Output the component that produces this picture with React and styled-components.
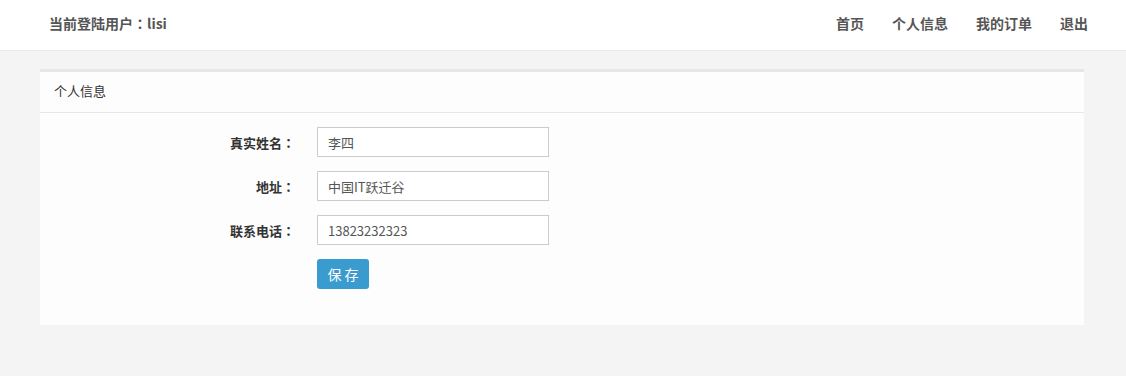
import styled, { createGlobalStyle } from "styled-components"

const GlobalStyle = createGlobalStyle`
  * { box-sizing: border-box; }
  body {
    margin: 0;
    background: #f4f4f4;
    font-family: "Noto Sans CJK SC", "Open Sans", sans-serif;
    color: #333;
  }
`

const Header = styled.header`
  height: 51px;
  background: #fff;
  border-bottom: 1px solid #ebebeb;
  display: flex;
  align-items: center;
  justify-content: space-between;
  padding: 0 38px 0 49px;
`

const UserText = styled.div`
  font-size: 14px;
  font-weight: bold;
  color: #555;
  margin-top: -4px;
`

// full-width colon drawn centred in its box, as in the original font
const Colon = styled.span`
  font-family: "Noto Sans CJK TC", sans-serif;
`

const Nav = styled.nav`
  display: flex;
  gap: 28px;
  margin-top: -4px;
`

const NavLink = styled.a`
  font-size: 14px;
  font-weight: bold;
  color: #555;
  text-decoration: none;
  cursor: pointer;
`

const Main = styled.main`
  padding: 18px 42px 0 40px;
`

const Panel = styled.section`
  background: #fdfdfd;
  border-top: 3px solid #e6e6e6;
  padding-bottom: 36px;
`

const PanelHeading = styled.div`
  height: 41px;
  padding: 0 14px 3px;
  display: flex;
  align-items: center;
  font-size: 13px;
  color: #333;
  border-bottom: 1px solid #e8e8e8;
`

const Form = styled.form`
  display: flex;
  flex-direction: column;
  gap: 14px;
  padding-top: 14px;
`

const Row = styled.div`
  display: flex;
  align-items: center;
  gap: 22px;
`

const Label = styled.label`
  width: 255px;
  text-align: right;
  font-size: 13px;
  font-weight: bold;
  color: #333;
  white-space: nowrap;
`

const Input = styled.input`
  width: 232px;
  height: 30px;
  border: 1px solid #ccc;
  background: #fff;
  padding: 0 10px;
  font-family: inherit;
  font-size: 13px;
  color: #555;
  outline: none;
`

const Button = styled.button`
  width: 52px;
  height: 30px;
  border: none;
  border-radius: 3px;
  background: #3a9bcf;
  color: #fff;
  font-family: inherit;
  font-size: 14px;
  letter-spacing: 3px;
  padding: 0 0 0 3px;
  cursor: pointer;
`

const fields = [
  { label: "真实姓名", value: "李四" },
  { label: "地址", value: "中国IT跃迁谷" },
  { label: "联系电话", value: "13823232323" },
]

const App = () => {
  return (
    <>
      <GlobalStyle />
      <Header>
        <UserText>当前登陆用户<Colon>：</Colon>lisi</UserText>
        <Nav>
          <NavLink>首页</NavLink>
          <NavLink>个人信息</NavLink>
          <NavLink>我的订单</NavLink>
          <NavLink>退出</NavLink>
        </Nav>
      </Header>
      <Main>
        <Panel>
          <PanelHeading>个人信息</PanelHeading>
          <Form onSubmit={e => e.preventDefault()}>
            {fields.map(f => (
              <Row key={f.label}>
                <Label>{f.label}<Colon>：</Colon></Label>
                <Input defaultValue={f.value} />
              </Row>
            ))}
            <Row>
              <Label />
              <Button type="submit">保存</Button>
            </Row>
          </Form>
        </Panel>
      </Main>
    </>
  )
}

export default App
